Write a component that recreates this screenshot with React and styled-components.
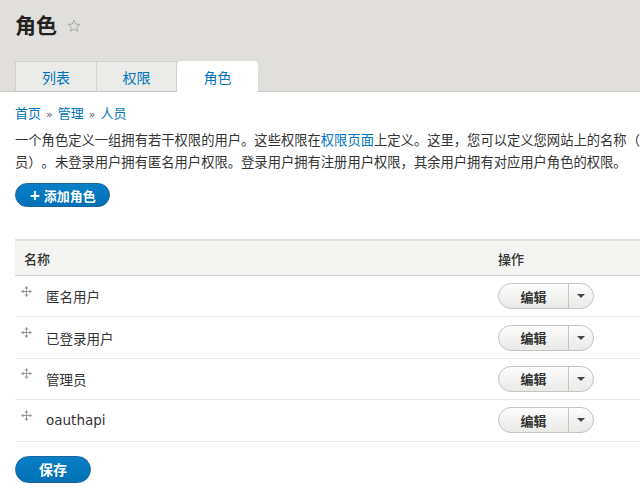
import React from "react";
import styled, { createGlobalStyle } from "styled-components";

const Global = createGlobalStyle`
  html, body { margin: 0; padding: 0; background: #fff; overflow: hidden; }
  body {
    font-family: "DejaVu Sans", "Noto Sans CJK SC", sans-serif;
    color: #333;
    -webkit-font-smoothing: antialiased;
    text-spacing-trim: space-all;
  }
`;

const Page = styled.div`
  width: 790px;
`;

const Header = styled.header`
  background: #e0dfdc;
  border-bottom: 1px solid #c8c7c3;
  padding: 0 15px;
`;

const TitleRow = styled.div`
  display: flex;
  align-items: center;
  gap: 10px;
  height: 61px;
  padding-bottom: 13px;
  box-sizing: border-box;
`;

const Title = styled.h1`
  margin: 0;
  font-family: "Noto Sans CJK SC", sans-serif;
  font-size: 21px;
  font-weight: 700;
  color: #222;
  line-height: 28px;
`;

const Star = styled.svg`
  width: 14px;
  height: 14px;
  margin-top: 3px;
`;

const Tabs = styled.nav`
  display: flex;
  margin-bottom: -1px;
`;

const Tab = styled.a`
  box-sizing: border-box;
  width: ${(p) => p.$w}px;
  height: 31px;
  display: flex;
  align-items: center;
  justify-content: center;
  font-family: "Noto Sans CJK SC", sans-serif;
  font-size: 14px;
  color: #0074bd;
  text-decoration: none;
  background: ${(p) => (p.$active ? "#fff" : "#eaeae8")};
  border: 1px solid ${(p) => (p.$active ? "#fff" : "#d3d2ce")};
  border-bottom: 1px solid ${(p) => (p.$active ? "#fff" : "#c8c7c3")};
  border-left-width: ${(p) => (p.$first || p.$active ? "1px" : "0")};
  border-radius: ${(p) => (p.$active ? "4px 4px 0 0" : "0")};
`;

const Content = styled.main`
  padding: 0 15px;
`;

const Breadcrumb = styled.nav`
  margin-top: 11px;
  font-size: 13px;
  line-height: 20px;
  font-family: "Noto Sans CJK SC", sans-serif;
  color: #444;
`;

const Link = styled.a`
  color: #0074bd;
  text-decoration: none;
`;

const Sep = styled.span`
  font-family: "DejaVu Sans", sans-serif;
  font-size: 11px;
  margin: 0 5px;
  color: #555;
`;

const Help = styled.p`
  margin: 4px 0 0;
  white-space: nowrap;
  font-family: "Noto Sans CJK SC", sans-serif;
  font-size: 13.3px;
  line-height: 21.5px;
  color: #333;
`;

const PrimaryButton = styled.button`
  display: inline-flex;
  align-items: center;
  justify-content: center;
  box-sizing: border-box;
  height: ${(p) => (p.$small ? 24 : 27)}px;
  padding: 0 ${(p) => (p.$small ? 13 : 23)}px;
  margin-top: ${(p) => p.$mt}px;
  border: 1px solid #1a64a0;
  border-radius: 20px;
  background: linear-gradient(to bottom, #0a7fc8, #0071b6);
  color: #fff;
  font-family: "Noto Sans CJK SC", sans-serif;
  font-size: ${(p) => (p.$small ? 13 : 14)}px;
  font-weight: 700;
  gap: 3px;
`;

const Plus = styled.span`
  font-family: "DejaVu Sans", sans-serif;
  font-size: 14px;
  font-weight: 700;
`;

const Table = styled.div`
  margin-top: 32px;
  width: 760px;
  border-top: 2px solid #e2e2e0;
`;

const HeadRow = styled.div`
  display: grid;
  grid-template-columns: 474px 1fr;
  height: 34px;
  align-items: center;
  background: #f4f4f2;
  border-bottom: 1px solid #cfcecb;
`;

const HeadCell = styled.div`
  padding-left: ${(p) => p.$pl}px;
  font-family: "Noto Sans CJK SC", sans-serif;
  font-size: 13px;
  font-weight: 500;
  color: #333;
`;

const Row = styled.div`
  display: grid;
  grid-template-columns: 474px 1fr;
  height: 40.4px;
  align-items: center;
  border-bottom: 1px solid #e8e8e6;
`;

const NameCell = styled.div`
  display: flex;
  align-items: center;
  padding-left: 6px;
  font-size: 13.5px;
  color: #333;
  font-family: "DejaVu Sans", "Noto Sans CJK SC", sans-serif;
`;

const Handle = styled.svg`
  width: 11px;
  height: 11px;
  margin-right: 14px;
  margin-top: -10px;
`;

const ActionCell = styled.div`
  padding-left: 9px;
`;

const SplitButton = styled.div`
  display: inline-flex;
  box-sizing: border-box;
  height: 26px;
  width: 96px;
  border: 1px solid #c4c4c2;
  border-radius: 14px;
  background: linear-gradient(to bottom, #fdfdfd, #e9e9e7);
  overflow: hidden;
`;

const EditPart = styled.span`
  flex: 0 0 69px;
  display: flex;
  align-items: center;
  justify-content: center;
  border-right: 1px solid #c4c4c2;
  font-family: "Noto Sans CJK SC", sans-serif;
  font-size: 13px;
  font-weight: 700;
  color: #333;
`;

const ArrowPart = styled.span`
  flex: 1;
  display: flex;
  align-items: center;
  justify-content: center;
`;

const Arrow = styled.span`
  width: 0;
  height: 0;
  border-left: 4px solid transparent;
  border-right: 4px solid transparent;
  border-top: 4px solid #444;
`;

const roles = ["匿名用户", "已登录用户", "管理员", "oauthapi"];

function DragIcon() {
  return (
    <Handle viewBox="0 0 11 11">
      <g stroke="#999" strokeWidth="1" fill="none">
        <line x1="5.5" y1="1" x2="5.5" y2="10" />
        <line x1="1" y1="5.5" x2="10" y2="5.5" />
      </g>
      <g fill="#999">
        <polygon points="5.5,0 3.5,2.5 7.5,2.5" />
        <polygon points="5.5,11 3.5,8.5 7.5,8.5" />
        <polygon points="0,5.5 2.5,3.5 2.5,7.5" />
        <polygon points="11,5.5 8.5,3.5 8.5,7.5" />
      </g>
    </Handle>
  );
}

export default function App() {
  return (
    <Page>
      <Global />
      <Header>
        <TitleRow>
          <Title>角色</Title>
          <Star viewBox="0 0 24 24">
            <polygon
              points="12,2 14.9,8.6 22,9.3 16.6,14 18.2,21 12,17.3 5.8,21 7.4,14 2,9.3 9.1,8.6"
              fill="none"
              stroke="#9a9a98"
              strokeWidth="1.4"
              strokeLinejoin="round"
            />
          </Star>
        </TitleRow>
        <Tabs>
          <Tab $w={82} $first>列表</Tab>
          <Tab $w={80}>权限</Tab>
          <Tab $w={81} $active>角色</Tab>
        </Tabs>
      </Header>
      <Content>
        <Breadcrumb>
          <Link>首页</Link>
          <Sep>»</Sep>
          <Link>管理</Link>
          <Sep>»</Sep>
          <Link>人员</Link>
        </Breadcrumb>
        <Help>
          一个角色定义一组拥有若干权限的用户。这些权限在<Link>权限页面</Link>上定义。这里，您可以定义您网站上的名称（例如：版主、编辑、管理
          <br />
          员）。未登录用户拥有匿名用户权限。登录用户拥有注册用户权限，其余用户拥有对应用户角色的权限。
        </Help>
        <PrimaryButton $small $mt={11}>
          <Plus>+</Plus>添加角色
        </PrimaryButton>
        <Table>
          <HeadRow>
            <HeadCell $pl={9}>名称</HeadCell>
            <HeadCell $pl={9}>操作</HeadCell>
          </HeadRow>
          {roles.map((r) => (
            <Row key={r}>
              <NameCell>
                <DragIcon />
                {r}
              </NameCell>
              <ActionCell>
                <SplitButton>
                  <EditPart>编辑</EditPart>
                  <ArrowPart>
                    <Arrow />
                  </ArrowPart>
                </SplitButton>
              </ActionCell>
            </Row>
          ))}
        </Table>
        <PrimaryButton $mt={14}>保存</PrimaryButton>
      </Content>
    </Page>
  );
}
